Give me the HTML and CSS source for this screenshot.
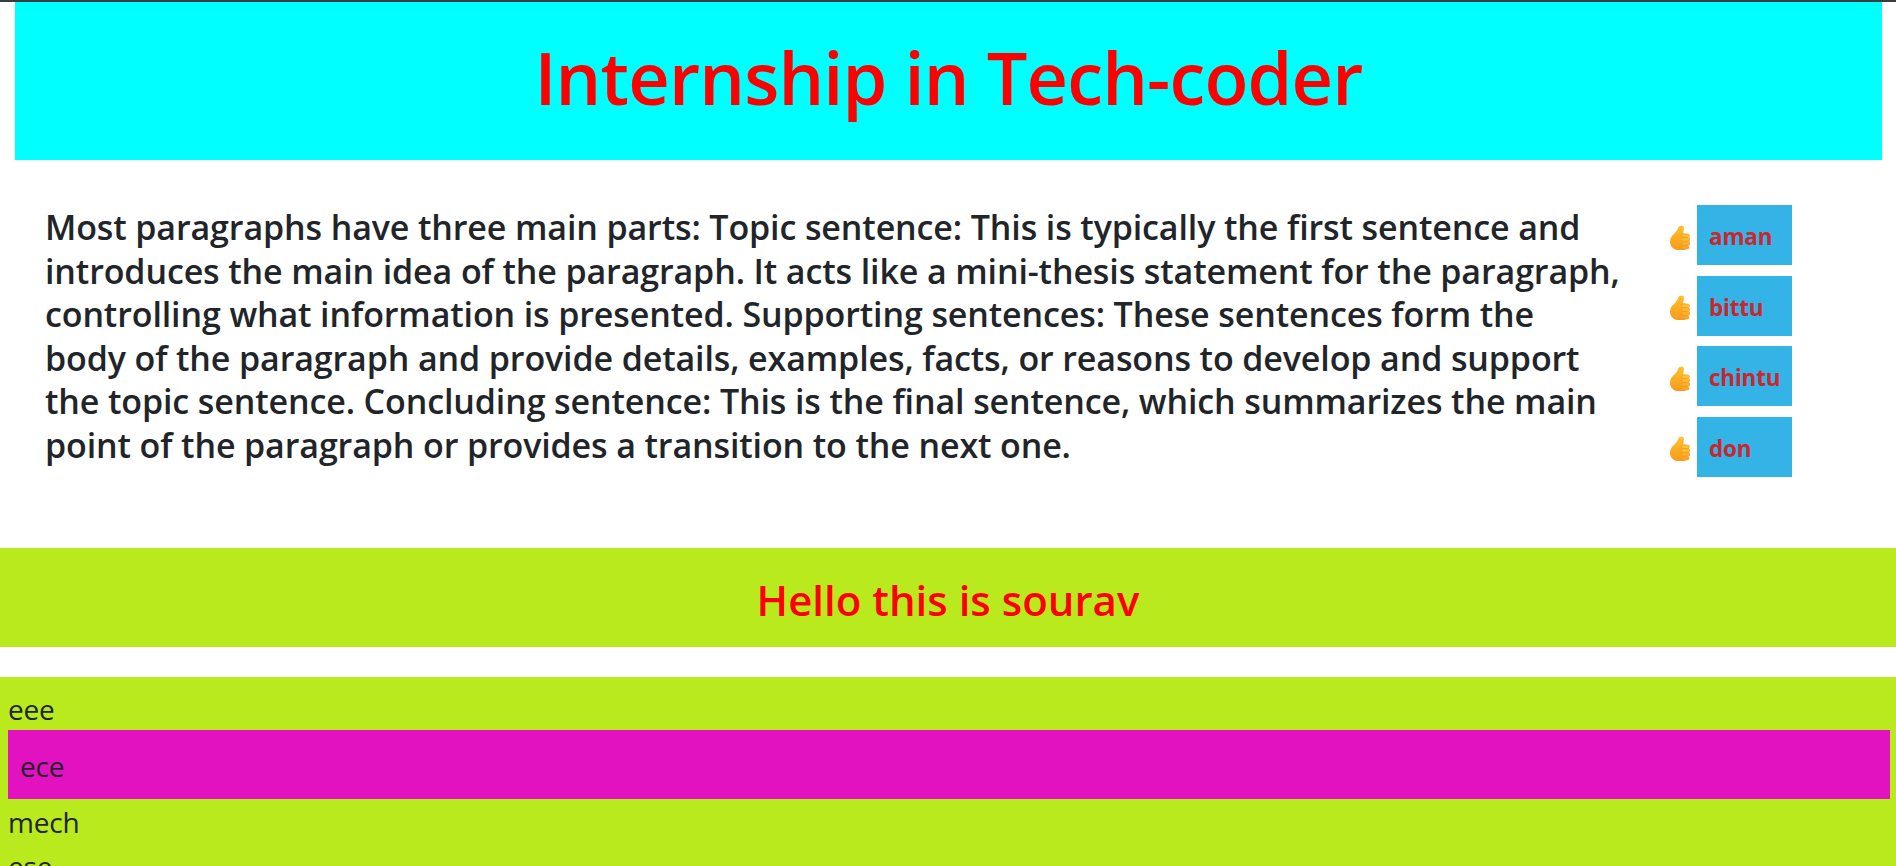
FILE: index.html
```html
<!DOCTYPE html>
<html>
<head>
  <title>Internship in Tech-coder</title>
  <link rel="stylesheet" href="styles.css">
</head>
<body>
  <svg class="defs" width="0" height="0">
    <defs>
      <linearGradient id="thumbFill" x1="0" y1="0" x2="0" y2="1">
        <stop offset="0" stop-color="#ffc02e"/>
        <stop offset="1" stop-color="#f79a1c"/>
      </linearGradient>
      <symbol id="thumb" viewBox="0 0 20 25">
        <path fill="url(#thumbFill)" d="M11.500 0.500c1.600 0 2.600 1.300 2.400 3l-0.700 5h2c1.500 0 2.300 1 2.300 2.500v10c0 2.300-1.700 4-4 4h-5c-4.800 0-8.500-3.500-8.500-8.300 0-3.300 1.500-5.500 3.600-7.500 2.300-2.200 3.700-3.800 4.600-6.500 0.300-1 1-1.700 2.300-1.700z"/>
        <rect x="11.500" y="9" width="8" height="3.600" rx="1.800" fill="#ffc23a" stroke="#ee9a1c" stroke-width="0.600"/>
        <rect x="11.500" y="12.800" width="8.500" height="3.600" rx="1.800" fill="#ffbb33" stroke="#ee9a1c" stroke-width="0.600"/>
        <rect x="11.500" y="16.600" width="8.500" height="3.600" rx="1.800" fill="#fdb02c" stroke="#ee9a1c" stroke-width="0.600"/>
        <rect x="11.500" y="20.400" width="7.500" height="3.600" rx="1.800" fill="#f9a626" stroke="#ee9a1c" stroke-width="0.600"/>
      </symbol>
    </defs>
  </svg>

  <header class="banner">
    <h1>Internship in Tech-coder</h1>
  </header>

  <section class="intro">
    <p class="intro-text">Most paragraphs have three main parts: Topic sentence: This is typically the first sentence and introduces the main idea of the paragraph. It acts like a mini-thesis statement for the paragraph, controlling what information is presented. Supporting sentences: These sentences form the<br>body of the paragraph and provide details, examples, facts, or reasons to develop and support the topic sentence. Concluding sentence: This is the final sentence, which summarizes the main point of the paragraph or provides a transition to the next one.</p>
    <ul class="names">
      <li class="name-row"><svg class="thumb"><use href="#thumb"/></svg><span class="name-box">aman</span></li>
      <li class="name-row"><svg class="thumb"><use href="#thumb"/></svg><span class="name-box">bittu</span></li>
      <li class="name-row"><svg class="thumb"><use href="#thumb"/></svg><span class="name-box">chintu</span></li>
      <li class="name-row"><svg class="thumb"><use href="#thumb"/></svg><span class="name-box">don</span></li>
    </ul>
  </section>

  <div class="hello">Hello this is sourav</div>

  <ul class="branches">
    <li class="branch">eee</li>
    <li class="branch branch-active">ece</li>
    <li class="branch branch-tall">mech</li>
    <li class="branch">ese</li>
  </ul>
</body>
</html>
```

FILE: styles.css
```css
html, body {
  height: 866px;
  overflow: hidden;
}

body {
  margin: 0;
  padding: 0;
  font-family: "Open Sans", "Noto Sans", sans-serif;
  color: #212529;
  background-color: #fff;
  border-top: 2px solid #3a3d40;
}

.defs {
  position: absolute;
}

.banner {
  height: 158px;
  margin: 0 14px 0 15px;
  padding-bottom: 8px;
  box-sizing: border-box;
  background-color: #0ff;
  display: flex;
  align-items: center;
  justify-content: center;
}

.banner h1 {
  margin: 0;
  color: #f00;
  font-size: 72px;
  font-weight: 600;
  letter-spacing: -0.8px;
}

.intro {
  display: flex;
  height: 388px;
  padding: 46px 0 0 45px;
  box-sizing: border-box;
}

.intro-text {
  width: 1580px;
  margin: 0;
  font-size: 34px;
  font-weight: 600;
  line-height: 43.500px;
  letter-spacing: -0.12px;
}

.names {
  list-style: none;
  margin: -1px 0 0 45px;
  padding: 0;
}

.name-row {
  display: flex;
  align-items: center;
  height: 60px;
  margin-bottom: 10.500px;
}

.thumb {
  width: 20px;
  height: 25px;
  margin-right: 7px;
  margin-top: 4px;
}

.name-box {
  display: flex;
  align-items: center;
  box-sizing: border-box;
  width: 95px;
  height: 60px;
  padding: 3px 0 0 12px;
  background-color: #34b3e6;
  color: #c9272d;
  font-size: 22.500px;
  font-weight: 700;
  letter-spacing: -0.2px;
}

.hello {
  height: 99px;
  line-height: 103px;
  background-color: #b9ea1e;
  color: #f00;
  text-align: center;
  font-size: 42px;
  font-weight: 600;
}

.branches {
  list-style: none;
  margin: 30px 0 0;
  padding: 11px 6px 0 8px;
  background-color: #b9ea1e;
}

.branch {
  font-size: 28px;
  line-height: 42px;
  letter-spacing: -0.2px;
}

.branch-active {
  box-sizing: border-box;
  height: 69px;
  line-height: 69px;
  padding: 2px 0 0 12px;
  background-color: #e212c0;
}

.branch-tall {
  line-height: 46px;
}
```
